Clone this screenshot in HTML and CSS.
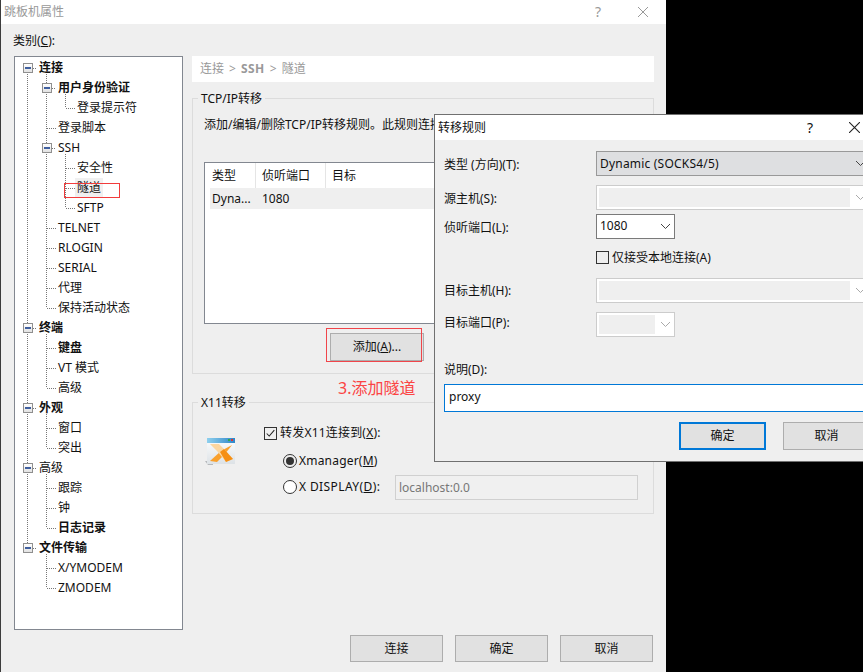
FILE: index.html
```html
<!DOCTYPE html>
<html lang="zh">
<head>
<meta charset="utf-8">
<title>跳板机属性</title>
<link rel="stylesheet" href="styles.css">
</head>
<body>
<div class="win">
  <div class="titlebar">
    <span class="title-text">跳板机属性</span>
    <span class="help">?</span>
    <svg class="close" viewBox="0 0 10 10" width="10" height="10"><path d="M0 0L10 10M10 0L0 10" stroke="#999" fill="none"/></svg>
  </div>
  <div class="main">
    <div class="left">
      <div class="cat-label">类别(<u>C</u>):</div>
      <div class="tree">
        <svg class="tree-lines" viewBox="15 56 167 572" width="167" height="572">
          <g stroke="#777" stroke-dasharray="1 1" fill="none">
            <path d="M27.5 73V542M46.5 73V307M65.5 93V107M65.5 153V207M46.5 333V387M46.5 413V447M46.5 473V527M46.5 553V587"/>
            <path d="M33 67.5H37M33 327.5H37M33 407.5H37M33 467.5H37M33 547.5H37"/>
            <path d="M52 87.5H56M52 147.5H56"/>
            <path d="M47 127.5H56M47 227.5H56M47 247.5H56M47 267.5H56M47 287.5H56M47 307.5H56M47 347.5H56M47 367.5H56M47 387.5H56M47 427.5H56M47 447.5H56M47 487.5H56M47 507.5H56M47 527.5H56M47 567.5H56M47 587.5H56"/>
            <path d="M66 107.5H75M66 167.5H75M66 187.5H75M66 207.5H75"/>
          </g>
        </svg>
        <div class="node l0 b"><i class="exp"></i><span>连接</span></div>
        <div class="node l1e b"><i class="exp"></i><span>用户身份验证</span></div>
        <div class="node l2"><span>登录提示符</span></div>
        <div class="node l1"><span>登录脚本</span></div>
        <div class="node l1e"><i class="exp"></i><span>SSH</span></div>
        <div class="node l2"><span>安全性</span></div>
        <div class="node l2 sel"><span>隧道</span><i class="mark"></i></div>
        <div class="node l2"><span>SFTP</span></div>
        <div class="node l1"><span>TELNET</span></div>
        <div class="node l1"><span>RLOGIN</span></div>
        <div class="node l1"><span>SERIAL</span></div>
        <div class="node l1"><span>代理</span></div>
        <div class="node l1"><span>保持活动状态</span></div>
        <div class="node l0 b"><i class="exp"></i><span>终端</span></div>
        <div class="node l1 b"><span>键盘</span></div>
        <div class="node l1"><span>VT 模式</span></div>
        <div class="node l1"><span>高级</span></div>
        <div class="node l0 b"><i class="exp"></i><span>外观</span></div>
        <div class="node l1"><span>窗口</span></div>
        <div class="node l1"><span>突出</span></div>
        <div class="node l0"><i class="exp"></i><span>高级</span></div>
        <div class="node l1"><span>跟踪</span></div>
        <div class="node l1"><span>钟</span></div>
        <div class="node l1 b"><span>日志记录</span></div>
        <div class="node l0 b"><i class="exp"></i><span>文件传输</span></div>
        <div class="node l1"><span>X/YMODEM</span></div>
        <div class="node l1"><span>ZMODEM</span></div>
      </div>
    </div>
    <div class="right">
      <div class="crumb"><span>连接</span><span class="gt">&gt;</span><b>SSH</b><span class="gt">&gt;</span><span>隧道</span></div>
      <div class="group tcp">
        <div class="legend">TCP/IP转移</div>
        <div class="desc">添加/编辑/删除TCP/IP转移规则。此规则连接</div>
        <div class="list">
          <div class="list-head"><span>类型</span><span>侦听端口</span><span>目标</span></div>
          <div class="list-row"><span>Dyna...</span><span>1080</span><span></span></div>
        </div>
        <div class="add-wrap"><button class="btn add">添加(<u>A</u>)...</button><i class="mark-add"></i></div>
      </div>
      <div class="note">3.添加隧道</div>
      <div class="group x11">
        <div class="legend">X11转移</div>
        <svg class="x-icon" viewBox="0 0 30 30" width="30" height="30">
          <defs>
            <linearGradient id="xbody" x1="0" y1="0" x2="0" y2="1"><stop offset="0" stop-color="#fdfefe"/><stop offset="1" stop-color="#dde2e6"/></linearGradient>
            <linearGradient id="xbar" x1="0" y1="0" x2="1" y2="0"><stop offset="0" stop-color="#8fd0ee"/><stop offset="1" stop-color="#2f86c8"/></linearGradient>
          </defs>
          <path d="M0 24H8V28H3Z" fill="#b5b8bb"/>
          <rect x="2" y="1" width="28" height="26" fill="url(#xbody)"/>
          <rect x="2" y="1" width="28" height="5" fill="url(#xbar)"/>
          <rect x="23" y="2" width="2" height="2" fill="#2fa84f"/>
          <rect x="26" y="2" width="2" height="2" fill="#d33"/>
          <path d="M27 8L16 14L5 24L12 25L20 17Z" fill="#f9a02c"/>
          <path d="M5 7H14L19 12L28 22L21 25L12 14Z" fill="#fbd6a0"/>
          <path d="M15 15L19 12L28 22L21 25Z" fill="#f58f14"/>
        </svg>
        <div class="x-form">
          <label class="x-row"><i class="check on"><svg viewBox="0 0 13 13" width="11" height="11"><path d="M2 6.5L5 9.5L11 2.5" stroke="#222" stroke-width="1.2" fill="none"/></svg></i><span class="spaced">转发X11连接到(<u>X</u>):</span></label>
          <label class="x-row radio-row first"><i class="radio on"></i><span class="spaced">Xmanager(<u>M</u>)</span></label>
          <div class="x-row radio-row second"><label class="disp"><i class="radio"></i><span class="spaced-more">X DISPLAY(<u>D</u>):</span></label><div class="disp-input">localhost:0.0</div></div>
        </div>
      </div>
      <div class="footer">
        <button class="btn foot">连接</button>
        <button class="btn foot">确定</button>
        <button class="btn foot">取消</button>
      </div>
    </div>
  </div>
</div>

<div class="dialog">
  <div class="d-title">
    <span>转移规则</span>
    <span class="d-help">?</span>
    <svg class="d-close" viewBox="0 0 10 10" width="11" height="11"><path d="M0 0L10 10M10 0L0 10" stroke="#222" fill="none"/></svg>
  </div>
  <div class="d-body">
    <div class="d-row r-type"><label class="lbl-down">类型 (方向)(T):</label>
      <div class="sel-box wide active"><span class="spaced">Dynamic (SOCKS4/5)</span><svg class="chev" viewBox="0 0 9 5" width="9" height="5"><path d="M0 0L4.5 4.5L9 0" stroke="#444" fill="none"/></svg></div>
    </div>
    <div class="d-row r-src"><label class="lbl-down">源主机(S):</label>
      <div class="sel-box wide off"><i class="inner"></i><svg class="chev" viewBox="0 0 9 5" width="9" height="5"><path d="M0 0L4.5 4.5L9 0" stroke="#aaa" fill="none"/></svg></div>
    </div>
    <div class="d-row r-port"><label class="lbl-down">侦听端口(L):</label>
      <div class="sel-box small white"><span class="val-up">1080</span><svg class="chev" viewBox="0 0 9 5" width="9" height="5"><path d="M0 0L4.5 4.5L9 0" stroke="#444" fill="none"/></svg></div>
    </div>
    <div class="d-row r-local"><label></label>
      <div class="local"><i class="check"></i><span>仅接受本地连接(A)</span></div>
    </div>
    <div class="d-row r-host"><label>目标主机(H):</label>
      <div class="sel-box wide off"><i class="inner"></i><svg class="chev" viewBox="0 0 9 5" width="9" height="5"><path d="M0 0L4.5 4.5L9 0" stroke="#aaa" fill="none"/></svg></div>
    </div>
    <div class="d-row r-tport"><label class="lbl-up">目标端口(P):</label>
      <div class="sel-box small off"><i class="inner"></i><svg class="chev" viewBox="0 0 9 5" width="9" height="5"><path d="M0 0L4.5 4.5L9 0" stroke="#aaa" fill="none"/></svg></div>
    </div>
    <div class="d-desc-label">说明(D):</div>
    <div class="d-input">proxy</div>
    <div class="d-buttons">
      <button class="btn d-btn primary">确定</button>
      <button class="btn d-btn">取消</button>
    </div>
  </div>
</div>
</body>
</html>
```
FILE: styles.css
```css
* { box-sizing: border-box; }
html, body { margin: 0; height: 100%; }
body {
  background: #000;
  overflow: hidden;
  position: relative;
  font: 12px/16px "Noto Sans", "Noto Sans CJK SC", sans-serif;
  color: #111;
}
i { font-style: normal; display: block; }
u { text-underline-offset: 1px; }
.spaced { letter-spacing: .2px; }
.spaced-more { letter-spacing: .4px; }

.win {
  width: 666px;
  height: 672px;
  background: #efefef;
  border-left: 1px solid #3c3c3c;
  display: flex;
  flex-direction: column;
}
.titlebar {
  height: 24px;
  background: #fff;
  display: flex;
  align-items: center;
  padding-left: 3px;
  color: #999;
  flex: none;
}
.help { margin-left: auto; margin-right: 37px; font-size: 14px; }
.close { margin-right: 18px; }

.main { flex: 1; display: flex; padding-bottom: 10px; min-height: 0; }
.left { width: 191px; padding: 9px 0 0 13px; flex: none; }
.cat-label { margin: 0 0 7px -1px; }
.tree {
  position: relative;
  width: 169px;
  height: 574px;
  background: #fff;
  border: 1px solid #828790;
  padding-top: 1px;
}
.tree-lines { position: absolute; left: 0; top: 0; }
.node {
  position: relative;
  height: 20px;
  display: flex;
  align-items: center;
  white-space: nowrap;
}
.node span { line-height: 16px; }
.b span { font-weight: 700; }
.l0 { padding-left: 8px; }
.l1e { padding-left: 27px; }
.l1 { padding-left: 43px; }
.l2 { padding-left: 62px; }
.exp {
  position: relative;
  width: 10px;
  height: 10px;
  border: 1px solid #8f8f8f;
  background: linear-gradient(#fff, #e2e2e2);
  margin-right: 6px;
  flex: none;
}
.exp::before {
  content: "";
  position: absolute;
  left: 1px;
  top: 3px;
  width: 6px;
  height: 2px;
  background: #3f5f9f;
}
.sel span { background: #f0f0f0; padding: 2px 2px; margin-left: -2px; }
.mark {
  position: absolute;
  left: 49px;
  top: 5px;
  width: 56px;
  height: 15px;
  border: 1px solid #f23c3c;
}

.right { width: 462px; padding-top: 32px; display: flex; flex-direction: column; }
.crumb {
  height: 26px;
  background: #fff;
  display: flex;
  align-items: center;
  padding-left: 8px;
  color: #999;
  margin-bottom: 16px;
  flex: none;
}
.crumb b { letter-spacing: .5px; }
.gt { margin: 0 5px; }
.group {
  position: relative;
  border: 1px solid #dcdcdc;
  flex: none;
}
.legend {
  position: absolute;
  left: 5px;
  top: -8px;
  padding: 0 3px;
  background: #efefef;
  line-height: 16px;
}
.tcp { height: 276px; padding: 18px 0 0 11px; }
.desc { white-space: nowrap; overflow: hidden; width: 231px; }
.list {
  margin-top: 29px;
  width: 438px;
  height: 162px;
  background: #fff;
  border: 1px solid #828790;
}
.list-head {
  display: grid;
  grid-template-columns: 51px 70px 1fr;
  height: 25px;
}
.list-head span {
  padding-left: 6px;
  line-height: 25px;
  border-right: 1px solid #e5e5e5;
}
.list-head span:first-child { padding-left: 7px; }
.list-row {
  display: grid;
  grid-template-columns: 46px 70px 1fr;
  margin-left: 5px;
  height: 21px;
  line-height: 21px;
  background: #efefef;
}
.list-row span { padding-left: 6px; }
.list-row span:first-child { padding-left: 2px; }
.add-wrap { position: relative; width: 94px; height: 28px; margin: 9px 0 0 126px; }
.btn {
  font: inherit;
  color: #111;
  background: #e1e1e1;
  border: 1px solid #adadad;
  padding: 0;
  border-radius: 0;
}
.add { width: 94px; height: 28px; }
.mark-add {
  position: absolute;
  left: -4px;
  top: -5px;
  width: 96px;
  height: 34px;
  border: 1px solid #f0454a;
}
.note {
  height: 28px;
  line-height: 28px;
  padding-left: 146px;
  font-size: 16px;
  color: #fb4444;
  flex: none;
}
.x11 { height: 112px; display: flex; padding: 20px 0 0 12px; }
.x-icon { margin: 14px 29px 0 0; flex: none; }
.x-row { display: flex; align-items: center; height: 20px; }
.radio-row { margin-left: 19px; }
.first { margin-top: 8px; }
.second { height: 26px; margin-top: 3px; }
.disp { display: flex; align-items: center; width: 112px; }
.check {
  width: 13px;
  height: 13px;
  border: 1px solid #333;
  margin-right: 3px;
  background: transparent;
  flex: none;
  display: flex;
  align-items: center;
  justify-content: center;
}
.radio {
  position: relative;
  width: 14px;
  height: 14px;
  border: 1px solid #333;
  border-radius: 50%;
  background: #fff;
  margin-right: 2px;
  flex: none;
}
.radio.on { background: #efefef; }
.radio.on::before {
  content: "";
  position: absolute;
  left: 2px;
  top: 2px;
  width: 8px;
  height: 8px;
  border-radius: 50%;
  background: #333;
}
.disp-input {
  width: 243px;
  height: 25px;
  border: 1px solid #d0d0d0;
  background: #f0f0f0;
  color: #777;
  line-height: 23px;
  padding-left: 3px;
}
.footer {
  margin-top: auto;
  display: flex;
  justify-content: flex-end;
  gap: 12px;
  padding-right: 1px;
}
.foot { width: 93px; height: 27px; }

.dialog {
  position: absolute;
  left: 434px;
  top: 114px;
  width: 440px;
  height: 348px;
  background: #efefef;
  border: 1px solid #707070;
}
.d-title {
  height: 25px;
  background: #fff;
  display: flex;
  align-items: center;
  padding: 0 13px 0 3px;
}
.d-help { margin-left: auto; margin-right: 36px; font-size: 14px; }
.d-body { padding: 11px 0 0 9px; }
.d-row { display: flex; align-items: center; height: 25px; }
.d-row label { width: 152px; flex: none; }
.d-row .lbl-down { padding-top: 2px; }
.d-row .lbl-up { padding-bottom: 3px; }
.val-up { padding-bottom: 2px; }
.r-src { margin-top: 9px; }
.r-port { margin-top: 4px; }
.r-local { margin-top: 8px; height: 21px; }
.r-host { margin-top: 10px; }
.r-tport { margin-top: 9px; }
.sel-box {
  height: 25px;
  display: flex;
  align-items: center;
  padding: 0 4px 0 3px;
  border: 1px solid #999;
  flex: none;
}
.wide { width: 274px; }
.small { width: 79px; }
.active { background: #dedfe1; }
.white { background: #fff; border-color: #7a7a7a; }
.off { background: #fff; border-color: #ccc; padding-left: 2px; }
.inner { flex: 1; height: 19px; background: #efefef; margin-right: 6px; }
.chev { margin-left: auto; flex: none; }
.local { display: flex; align-items: center; }
.d-desc-label { margin-top: 25px; }
.d-input {
  margin-top: 6px;
  width: 440px;
  height: 28px;
  background: #fff;
  border: 1px solid #0078d7;
  line-height: 24px;
  padding-left: 4px;
}
.d-buttons { display: flex; gap: 17px; margin: 10px 0 0 235px; }
.d-btn { width: 87px; height: 28px; }
.primary { border: 2px solid #0078d7; }
```
